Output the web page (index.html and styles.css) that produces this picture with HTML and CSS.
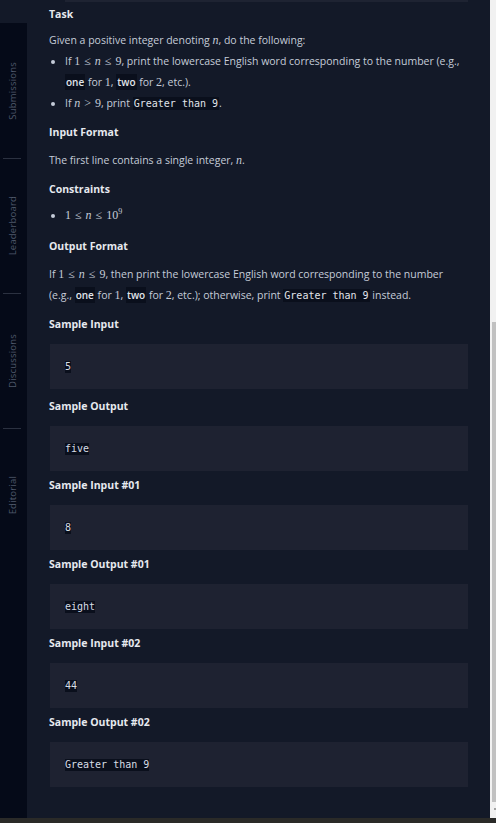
FILE: index.html
```html
<!DOCTYPE html>
<html lang="en">
<head>
<meta charset="utf-8">
<title>Task</title>
<link rel="stylesheet" href="styles.css">
</head>
<body>
<div class="viewport">
  <aside class="rail">
    <nav class="tabs">
      <div class="tab"><span class="tab-label">Submissions</span></div>
      <div class="tab"><span class="tab-label">Leaderboard</span></div>
      <div class="tab"><span class="tab-label">Discussions</span></div>
      <div class="tab"><span class="tab-label">Editorial</span></div>
    </nav>
  </aside>
  <main class="content">
    <div class="top-edge"></div>
    <h3 class="h task">Task</h3>
    <p class="p given">Given a positive integer denoting <i class="m">n</i>, do the following:</p>
    <ul class="list">
      <li>If <span class="m">1<span class="rel">≤</span><i>n</i><span class="rel">≤</span>9</span>, print the lowercase English word corresponding to the number (e.g.,<br><code class="kw">one</code> for <span class="m">1</span>, <code class="kw">two</code> for <span class="m">2</span>, etc.).</li>
      <li>If <span class="m"><i>n</i><span class="rel">&gt;</span>9</span>, print <code class="mono">Greater than 9</code>.</li>
    </ul>
    <h3 class="h">Input Format</h3>
    <p class="p">The first line contains a single integer, <i class="m">n</i>.</p>
    <h3 class="h">Constraints</h3>
    <ul class="list short">
      <li><span class="m">1<span class="rel">≤</span><i>n</i><span class="rel">≤</span>10<sup>9</sup></span></li>
    </ul>
    <h3 class="h after-constraints">Output Format</h3>
    <p class="p">If <span class="m">1<span class="rel">≤</span><i>n</i><span class="rel">≤</span>9</span>, then print the lowercase English word corresponding to the number<br>(e.g., <code class="kw">one</code> for <span class="m">1</span>, <code class="kw">two</code> for <span class="m">2</span>, etc.); otherwise, print <code class="mono">Greater than 9</code> instead.</p>
    <h3 class="h">Sample Input</h3>
    <pre class="box"><code>5</code></pre>
    <h3 class="h sample-first">Sample Output</h3>
    <pre class="box"><code>five</code></pre>
    <h3 class="h sample">Sample Input #01</h3>
    <pre class="box"><code>8</code></pre>
    <h3 class="h sample">Sample Output #01</h3>
    <pre class="box"><code>eight</code></pre>
    <h3 class="h sample">Sample Input #02</h3>
    <pre class="box"><code>44</code></pre>
    <h3 class="h sample">Sample Output #02</h3>
    <pre class="box"><code>Greater than 9</code></pre>
  </main>
  <div class="scrollbar">
    <div class="thumb"></div>
    <div class="arrow"></div>
  </div>
</div>
<div class="bottom-bar"></div>
</body>
</html>
```

FILE: styles.css
```css
html, body {
  margin: 0;
  padding: 0;
}
body {
  width: 496px;
  height: 823px;
  overflow: hidden;
  background: #131928;
  font-family: "Open Sans", "Noto Sans", sans-serif;
  color: #c5ccd8;
  display: flex;
  flex-direction: column;
}
.viewport {
  display: flex;
  height: 818px;
}
.rail {
  width: 27px;
  flex: none;
  padding-top: 23px;
  display: flex;
  flex-direction: column;
}
.tabs {
  flex: 1;
  background: #050a18;
  display: flex;
  flex-direction: column;
}
.tab {
  height: 135px;
  display: flex;
  align-items: center;
  justify-content: center;
  position: relative;
  padding-right: 3px;
}
.tab + .tab::before {
  content: "";
  position: absolute;
  top: 0;
  left: 3px;
  width: 18px;
  height: 1px;
  background: #2b3140;
}
.tab-label {
  writing-mode: vertical-rl;
  transform: rotate(180deg);
  font-size: 9.5px;
  color: #4e586a;
  letter-spacing: 0.2px;
}
.content {
  flex: 1;
  padding: 0 22px;
  min-width: 0;
}
.top-edge {
  height: 2px;
  margin-left: 16px;
  background: #1e2332;
}
.h {
  margin: 12px 0 0;
  font-size: 10.5px;
  line-height: 12px;
  font-weight: 700;
  color: #e6e9ef;
}
.h.task {
  margin-top: 6px;
}
.h.after-constraints {
  margin-top: 14px;
}
.p {
  margin: 12px 0 0;
  font-size: 10.5px;
  line-height: 21px;
  white-space: nowrap;
}
.p.given {
  margin-top: 10px;
}
.list {
  margin: 0;
  padding-left: 16px;
  font-size: 10.5px;
  line-height: 21px;
  white-space: nowrap;
}
.list.short {
  margin-top: 10px;
}
.m {
  font-family: "Liberation Serif", "DejaVu Serif", serif;
  font-size: 12px;
}
.m i, i.m {
  font-style: italic;
}
.rel {
  margin: 0 4px;
}
sup {
  font-size: 8px;
  line-height: 0;
  vertical-align: 5px;
}
code.kw {
  font-family: "Open Sans", sans-serif;
  font-weight: 600;
  font-size: 10px;
  background: #0a0f1c;
  color: #e0e4ea;
  padding: 1px 1px;
}
code.mono {
  font-family: "DejaVu Sans Mono", monospace;
  font-size: 10px;
  background: #0a0f1c;
  color: #e0e4ea;
  padding: 1px 1px;
}
.h.sample-first {
  margin-top: 11px;
}
.h.sample {
  margin-top: 8px;
}
.box {
  margin: 14px 0 0 1px;
  height: 45px;
  box-sizing: border-box;
  padding: 0 15px;
  background: #1e2231;
  display: flex;
  align-items: center;
}
.box code {
  font-family: "DejaVu Sans Mono", monospace;
  font-size: 10px;
  line-height: 12px;
  color: #d8dde5;
  background: #0a0f1c;
}
.scrollbar {
  width: 6px;
  flex: none;
  background: #f1f1f1;
  display: flex;
  flex-direction: column;
  align-items: flex-end;
}
.thumb {
  margin-top: 322px;
  width: 4px;
  height: 480px;
  background: #c1c1c1;
}
.arrow {
  margin-top: 6px;
  width: 2px;
  height: 2px;
  background: #a3a3a3;
}
.bottom-bar {
  height: 5px;
  background: #2a2a28;
}
```
